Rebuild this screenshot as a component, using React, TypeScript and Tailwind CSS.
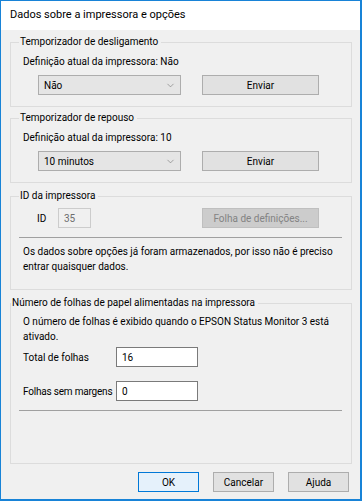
import { ChevronDown } from 'lucide-react';

const font = { fontFamily: '"Segoe UI", Roboto, "Noto Sans", sans-serif' };

const Button = ({ label, disabled, focused }: { label: string; disabled?: boolean; focused?: boolean }) => (
  <div
    className={
      'flex items-center justify-center h-[20px] border ' +
      (disabled
        ? 'bg-[#cccccc] border-[#bfbfbf] text-[#838383]'
        : focused
          ? 'bg-[#e5f1fb] border-[#0078d7] text-black'
          : 'bg-[#e1e1e1] border-[#adadad] text-black')
    }
  >
    {label}
  </div>
);

const Select = ({ value }: { value: string }) => (
  <div className="flex items-center justify-between w-[143px] h-[20px] pl-[5px] pr-[4px] bg-[#e5e5e5] border border-[#adadad]">
    <span>{value}</span>
    <ChevronDown size={11} strokeWidth={1.2} className="text-[#666]" />
  </div>
);

// group box: top edge is drawn as a row so the title sits in the line
const Group = ({ title, flush, className, children }: { title: string; flush?: boolean; className?: string; children: React.ReactNode }) => (
  <div className={className}>
    <div className="flex items-end h-[16px]">
      <div className={(flush ? 'w-[1px]' : 'w-[9px]') + ' h-[8px] border-l border-t border-[#dcdcdc]'} />
      <span className="px-[1px] leading-[16px]">{title}</span>
      <div className="flex-1 h-[8px] ml-[2px] border-t border-r border-[#dcdcdc]" />
    </div>
    <div className="border-l border-r border-b border-[#dcdcdc] pl-[12px] pr-[8px]">{children}</div>
  </div>
);

const Separator = ({ className }: { className?: string }) => (
  <div className={'h-px bg-[#a0a0a0] ml-[-4px] mr-[1px] ' + (className ?? '')} />
);

export default function App() {
  return (
    <div
      className="w-[362px] h-[501px] flex flex-col bg-[#f0f0f0] border border-[#1883d7] border-r-2 border-b-2 text-[10px] text-black"
      style={font}
    >
      <div className="h-[29px] shrink-0 bg-white flex items-center pl-[9px] text-[11px]">
        Dados sobre a impressora e opções
      </div>

      <div className="flex flex-col pl-[9px] pr-[8px] pt-[4px]">
        <Group title="Temporizador de desligamento">
          <div className="leading-[16px] pt-[4px]">Definição atual da impressora: Não</div>
          <div className="flex items-center mt-[5px] pb-[11px] pl-[15px]">
            <Select value="Não" />
            <div className="w-[117px] ml-[21px]">
              <Button label="Enviar" />
            </div>
          </div>
        </Group>

        <Group title="Temporizador de repouso" className="mt-[3px]">
          <div className="leading-[16px] pt-[4px]">Definição atual da impressora: 10</div>
          <div className="flex items-center mt-[5px] pb-[11px] pl-[15px]">
            <Select value="10 minutos" />
            <div className="w-[117px] ml-[21px]">
              <Button label="Enviar" />
            </div>
          </div>
        </Group>

        <Group title="ID da impressora" className="mt-[5px]">
          <div className="flex items-center pt-[4px] pl-[14px]">
            <span className="w-[21px]">ID</span>
            <div className="w-[33px] h-[20px] flex items-center px-[5px] border border-[#cccccc] text-[#6d6d6d]">35</div>
            <div className="w-[117px] ml-[111px]">
              <Button label="Folha de definições..." disabled />
            </div>
          </div>
          <Separator className="mt-[9px]" />
          <div className="leading-[15px] mt-[6px] pb-[15px]">
            Os dados sobre opções já foram armazenados, por isso não é preciso
            <br />
            entrar quaisquer dados.
          </div>
        </Group>

        <Group title="Número de folhas de papel alimentadas na impressora" flush className="mt-[5px]">
          <div className="leading-[15px] pt-[3px]">
            O número de folhas é exibido quando o EPSON Status Monitor 3 está
            <br />
            ativado.
          </div>
          <div className="flex items-center mt-[3px]">
            <span className="w-[93px]">Total de folhas</span>
            <div className="w-[82px] h-[20px] flex items-center px-[5px] bg-white border border-[#7a7a7a]">16</div>
          </div>
          <div className="flex items-center mt-[14px]">
            <span className="w-[93px] tracking-[-0.2px]">Folhas sem margens</span>
            <div className="w-[82px] h-[20px] flex items-center px-[5px] bg-white border border-[#7a7a7a]">0</div>
          </div>
          <Separator className="mt-[9px]" />
          <div className="h-[52px]" />
        </Group>
      </div>

      <div className="flex justify-end gap-[14px] mt-[8px] pr-[11px]">
        <div className="w-[61px]">
          <Button label="OK" focused />
        </div>
        <div className="w-[61px]">
          <Button label="Cancelar" />
        </div>
        <div className="w-[61px]">
          <Button label="Ajuda" />
        </div>
      </div>
    </div>
  );
}
